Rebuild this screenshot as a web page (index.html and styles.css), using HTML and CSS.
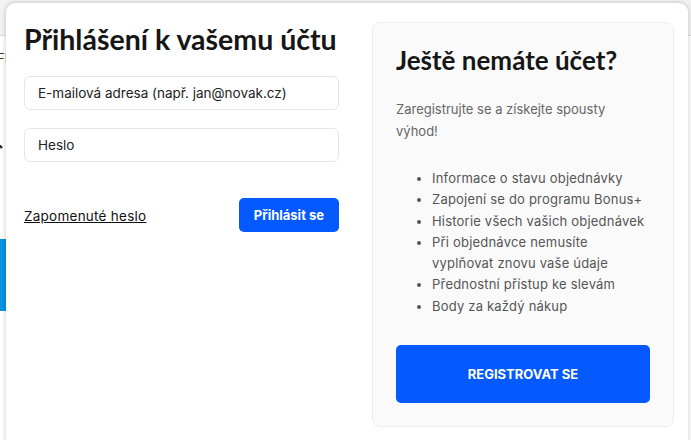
FILE: index.html
```html
<!DOCTYPE html>
<html lang="cs">
<head>
    <meta charset="UTF-8">
    <title>Přihlášení</title>
    <link rel="stylesheet" href="styles.css">
</head>
<body>
    <div class="page">
        <div class="page-top"></div>
        <div class="page-nav">
            <span>FR</span>
            <svg class="page-arrow" width="14" height="14" viewBox="0 0 14 14">
                <path d="M2 3 L9 10" stroke="#222" stroke-width="2.4" fill="none"/>
            </svg>
        </div>
        <div class="page-banner"></div>
    </div>

    <div class="modal">
        <div class="login">
            <h1>Přihlášení k vašemu účtu</h1>
            <form class="login-form">
                <input type="text" placeholder="E-mailová adresa (např. jan@novak.cz)">
                <input type="password" placeholder="Heslo">
                <div class="login-actions">
                    <a href="#" class="forgot">Zapomenuté heslo</a>
                    <button type="button" class="btn-login">Přihlásit se</button>
                </div>
            </form>
        </div>

        <div class="register">
            <h2>Ještě nemáte účet?</h2>
            <p>Zaregistrujte se a získejte spousty výhod!</p>
            <ul>
                <li>Informace o stavu objednávky</li>
                <li>Zapojení se do programu Bonus+</li>
                <li>Historie všech vašich objednávek</li>
                <li>Při objednávce nemusíte vyplňovat znovu vaše údaje</li>
                <li>Přednostní přístup ke slevám</li>
                <li>Body za každý nákup</li>
            </ul>
            <button type="button" class="btn-register">Registrovat se</button>
        </div>
    </div>
</body>
</html>
```

FILE: styles.css
```css
* {
    box-sizing: border-box;
}
html, body {
    margin: 0;
    height: 100%;
    overflow: hidden;
}
body {
    font-family: Inter, "Noto Sans", sans-serif;
    color: #222;
    background: #fff;
}

/* page behind the modal */
.page-top {
    height: 36px;
    background: #f2f2f2;
    border-bottom: 1px solid #ddd;
}
.page-nav {
    height: 203px;
    padding-top: 14px;
    font-size: 13px;
    color: #333;
}
.page-nav span {
    display: block;
    margin-left: -3px;
}
.page-arrow {
    display: block;
    margin: 72px 0 0 -7px;
}
.page-banner {
    width: 50%;
    height: 72px;
    background: #0a93e0;
}

/* modal */
.modal {
    position: absolute;
    top: 3px;
    left: 6px;
    width: 682px;
    height: 460px;
    background: #fff;
    border-radius: 9px;
    box-shadow: 0 0 5px rgba(0, 0, 0, 0.22);
    padding: 19px 14px 0 18px;
    display: grid;
    grid-template-columns: 315px 1fr;
    column-gap: 33px;
    align-items: start;
}

h1, h2 {
    font-family: Lato, sans-serif;
    font-weight: 700;
    color: #161616;
    margin: 0;
}
h1 {
    font-size: 28.5px;
    line-height: 34px;
    margin-bottom: 20px;
    white-space: nowrap;
}

.login-form input {
    display: block;
    width: 100%;
    height: 34px;
    margin-bottom: 18px;
    padding: 0 13px;
    border: 1px solid #e6e6e6;
    border-radius: 6px;
    font-family: inherit;
    font-size: 13.5px;
    color: #222;
}
.login-form input::placeholder {
    color: #222;
}
.login-actions {
    display: flex;
    justify-content: space-between;
    align-items: center;
    margin-top: 36px;
}
.forgot {
    color: #111;
    font-size: 13.5px;
    letter-spacing: 0.25px;
    text-decoration: underline;
    margin-top: 2px;
}
.btn-login {
    height: 34px;
    padding: 0 15px;
    background: #0459ff;
    color: #fff;
    border: none;
    border-radius: 5px;
    font-family: inherit;
    font-weight: 700;
    font-size: 13px;
    cursor: pointer;
}

.register {
    background: #fafafa;
    border: 1px solid #eeeeee;
    border-radius: 8px;
    padding: 22px 23px 23px 23px;
}
h2 {
    font-size: 26px;
    line-height: 30px;
    margin-bottom: 23px;
}
.register p {
    margin: 0 0 26px;
    max-width: 230px;
    font-size: 13px;
    line-height: 22px;
    color: #666;
}
.register ul {
    margin: 0 0 28px;
    padding-left: 36px;
    font-size: 13px;
    letter-spacing: 0.2px;
    line-height: 21.3px;
    color: #555;
}
.btn-register {
    display: block;
    width: 100%;
    height: 58px;
    background: #0459ff;
    color: #fff;
    border: none;
    border-radius: 5px;
    font-family: inherit;
    font-weight: 700;
    font-size: 13px;
    text-transform: uppercase;
    cursor: pointer;
}
```
